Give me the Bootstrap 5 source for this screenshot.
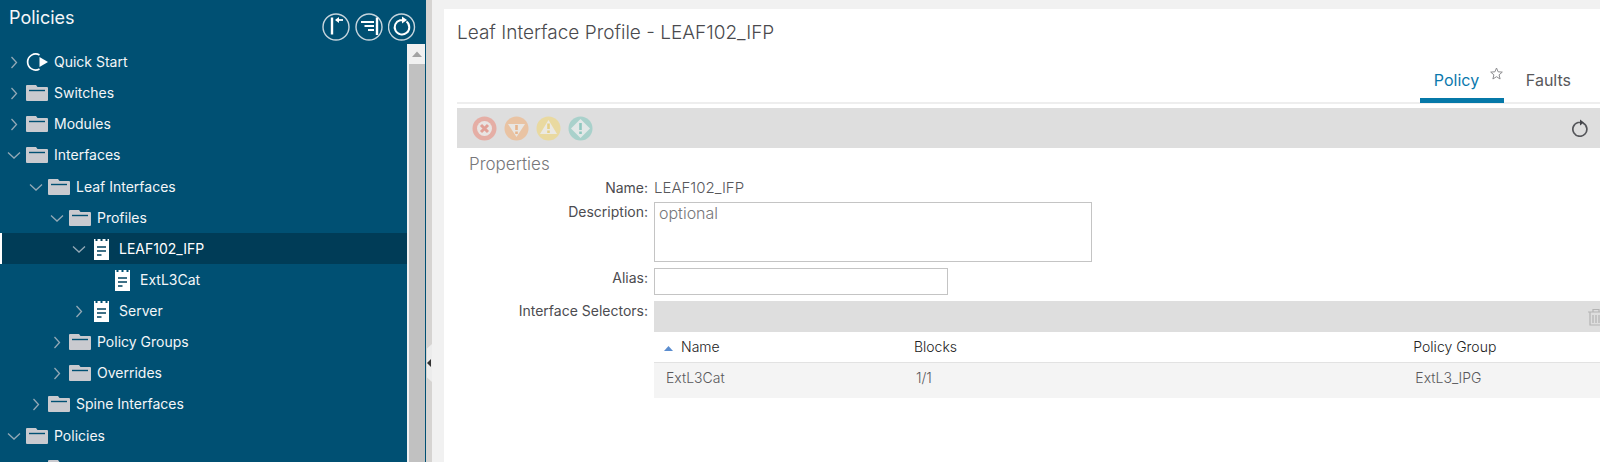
<!DOCTYPE html>
<html lang="en">
<head>
<meta charset="utf-8">
<meta name="viewport" content="width=device-width, initial-scale=1">
<title>Policies - Leaf Interface Profile</title>
<link href="https://cdn.jsdelivr.net/npm/bootstrap@5.3.0/dist/css/bootstrap.min.css" rel="stylesheet">
<style>
  body { font-family: Inter, "Liberation Sans", sans-serif; font-size: 14px; line-height: 20px; color: #58585b; background: #f1f1f1; }
  .app-shell { height: 100vh; }
  .side-pane { flex: 0 0 426px; background: #005073; color: #f4f6f8; }
  .side-head { height: 46px; padding: 8px 10px 0 9px; }
  .side-title { font-size: 18px; line-height: 20px; font-weight: 400; }
  .side-tools { gap: 5px; padding-top: 5px; }
  .icon-btn { border: 0; background: none; padding: 0; line-height: 0; color: inherit; }
  .tree-area { border-right: 1px solid #005073; }
  .tree-view, .tree-view ul { list-style: none; margin: 0; padding: 0; }
  .tree-view { padding-top: 2px; }
  .tree-view > li > ul { padding: 1px 0; }
  .tree-row { height: 31px; padding-left: 4px; color: inherit; text-decoration: none; font-size: 14px; white-space: nowrap; }
  .tree-row svg { flex: none; }
  .tree-row .chev { width: 20px; height: 20px; margin-right: 2px; }
  .tree-row .node-icon { width: 22px; height: 24px; margin-right: 6px; }
  .lv1 { padding-left: 26px; }
  .lv2 { padding-left: 47px; }
  .lv3 { padding-left: 69px; }
  .lv4 { padding-left: 90px; }
  .tree-row.is-current { background: #003c57; box-shadow: inset 2px 0 #fff; color: #fff; }
  .scroll-track { flex: 0 0 18px; background: #c1c1c1; border-left: 2px solid #f1f1f1; }
  .scroll-up { height: 20px; background: #f1f1f1; }
  .splitter { flex: 0 0 6px; background: #d6d4d2; }
  .splitter-grip { top: 344px; left: 1px; width: 5px; height: 38px; background: #ececec; clip-path: polygon(100% 0, 100% 100%, 0 88%, 0 12%); }
  .main-pane { margin: 9px 0 0 12px; padding-left: 13px; background: #fff; }
  .page-title { font-size: 19px; line-height: 24px; font-weight: 300; margin: 0; padding-top: 12px; color: #4a4a4e; }
  .tab-strip { height: 51px; border-bottom: 2px solid #eee; padding-right: 7px; }
  .tab-link { border: 0; background: none; color: #58585b; font-size: 16px; line-height: 20px; padding: 0 22px 8px; border-bottom: 5px solid transparent; margin-bottom: -1px; }
  .tab-link.is-active { color: #0a78ad; border-bottom-color: #0578a8; padding: 0 0 8px 14px; width: 84px; text-align: left; }
  .tab-star { top: -3px; left: 70px; }
  .fault-bar { height: 40px; margin-top: 4px; padding: 0 12px 0 15px; gap: 7px; background: #dedede; }
  .section-title { font-size: 17px; line-height: 20px; font-weight: 300; margin: 0; padding: 6px 0 4px 12px; color: #77777a; }
  .form-line { margin-bottom: 6px; }
  .form-line > label, .form-line > .side-label { flex: 0 0 197px; padding-right: 6px; text-align: right; color: #4c4c50; }
  .plain-value { font-size: 15px; font-weight: 300; }
  .field-box { border: 1px solid #c4c4c4; background: #fff; padding: 0 4px; outline-color: #0578a8; color: #58585b; font-size: 16px; line-height: 20px; resize: none; }
  .field-box::placeholder { color: #77777a; font-weight: 300; opacity: 1; }
  .desc-box { flex: 0 1 438px; height: 60px; }
  .alias-box { flex: 0 1 294px; height: 27px; }
  .grid-bar { height: 31px; background: #dedede; overflow: hidden; }
  .grid-bar .icon-btn { margin-right: -4px; }
  .sel-grid { width: 100%; table-layout: fixed; border-collapse: collapse; }
  .sel-grid th { height: 30px; padding: 0 14px; font-weight: 300; color: #222; border-bottom: 1px solid #e2e2e2; }
  .sel-grid th:first-child { padding-left: 10px; }
  .sel-grid td { height: 36px; padding: 0 16px 4px; font-weight: 300; background: #f4f4f4; }
  .sel-grid td:first-child { padding-left: 12px; }
  .sel-grid th:last-child { padding-left: 12px; }
  .sel-grid td:last-child { padding-left: 14px; }
  .col-a { width: 26%; }
  .col-b { width: 53%; }
</style>
<script src="https://cdn.jsdelivr.net/npm/bootstrap@5.3.0/dist/js/bootstrap.bundle.min.js"></script>
</head>
<body>
<svg class="d-none" aria-hidden="true">
  <symbol id="i-right" viewBox="0 0 20 20"><path d="M7.500 5l5 5.500-5 5.500" fill="none" stroke="#93a9b6" stroke-width="1.300"/></symbol>
  <symbol id="i-down" viewBox="0 0 20 20"><path d="M4 7.500l6 5.500 6-5.500" fill="none" stroke="#93a9b6" stroke-width="1.300"/></symbol>
  <symbol id="i-folder" viewBox="0 0 22 24"><path d="M0 5q0-1 1-1h9l1.500 2H21q1 0 1 1v12q0 1-1 1H1q-1 0-1-1z" fill="#c9cacf"/><path d="M3 9.500h16" stroke="#005073" stroke-width="1.400"/></symbol>
  <symbol id="i-doc" viewBox="0 0 22 24"><path d="M3 2h1.500v2h2V2h3v2h2V2h3v2h2V2H18v21H3z" fill="#fff"/><path d="M6 10h9M6 14h9M6 18h4.500" stroke="#00425f" stroke-width="1.500"/></symbol>
  <symbol id="i-start" viewBox="0 0 22 24"><path d="M13.500 5A8 8 0 1 0 13.500 19" fill="none" stroke="#fff" stroke-width="1.700"/><path d="M13.500 7l8.500 5-8.500 5z" fill="#fff"/></symbol>
</svg>

<div class="app-shell d-flex overflow-hidden">
  <aside class="side-pane d-flex flex-column">
    <header class="side-head d-flex justify-content-between align-items-start">
      <h1 class="side-title m-0">Policies</h1>
      <div class="side-tools d-flex">
        <button class="icon-btn" type="button" aria-label="Collapse pane"><svg width="28" height="28" viewBox="0 0 28 28" fill="none" stroke="#fff"><circle cx="14" cy="14" r="13" stroke="#c6d5dd" stroke-width="1.400"/><path d="M10 4.500v17" stroke-width="2.400"/><path d="M14 7h7" stroke-width="1.800"/><path d="M13 7l4-3v6z" fill="#fff" stroke="none"/></svg></button>
        <button class="icon-btn" type="button" aria-label="Collapse tree"><svg width="28" height="28" viewBox="0 0 28 28" fill="none" stroke="#fff"><circle cx="14" cy="14" r="13" stroke="#c6d5dd" stroke-width="1.400"/><path d="M22 4.500v17.500" stroke-width="2.400"/><path d="M6 9h13M9.500 13h9.500M13 17h6" stroke-width="1.900"/></svg></button>
        <button class="icon-btn" type="button" aria-label="Refresh tree"><svg width="28" height="28" viewBox="0 0 28 28" fill="none" stroke="#fff"><circle cx="13.500" cy="14" r="13" stroke="#c6d5dd" stroke-width="1.400"/><path d="M18.500 8.500A7.300 7.300 0 1 1 12 7.200h4" stroke-width="2"/><path d="M14 3.500l5 3.500-5 3.500z" fill="#fff" stroke="none"/></svg></button>
      </div>
    </header>
    <div class="tree-area d-flex flex-grow-1 overflow-hidden">
      <nav class="flex-grow-1" aria-label="Policies">
        <ul class="tree-view">
          <li><a href="#" class="tree-row d-flex align-items-center"><svg class="chev"><use href="#i-right"/></svg><svg class="node-icon"><use href="#i-start"/></svg>Quick Start</a></li>
          <li><a href="#" class="tree-row d-flex align-items-center"><svg class="chev"><use href="#i-right"/></svg><svg class="node-icon"><use href="#i-folder"/></svg>Switches</a></li>
          <li><a href="#" class="tree-row d-flex align-items-center"><svg class="chev"><use href="#i-right"/></svg><svg class="node-icon"><use href="#i-folder"/></svg>Modules</a></li>
          <li><a href="#" class="tree-row d-flex align-items-center"><svg class="chev"><use href="#i-down"/></svg><svg class="node-icon"><use href="#i-folder"/></svg>Interfaces</a>
            <ul>
              <li><a href="#" class="tree-row lv1 d-flex align-items-center"><svg class="chev"><use href="#i-down"/></svg><svg class="node-icon"><use href="#i-folder"/></svg>Leaf Interfaces</a>
                <ul>
                  <li><a href="#" class="tree-row lv2 d-flex align-items-center"><svg class="chev"><use href="#i-down"/></svg><svg class="node-icon"><use href="#i-folder"/></svg>Profiles</a>
                    <ul>
                      <li><a href="#" class="tree-row lv3 is-current d-flex align-items-center" aria-current="page"><svg class="chev"><use href="#i-down"/></svg><svg class="node-icon"><use href="#i-doc"/></svg>LEAF102_IFP</a>
                        <ul>
                          <li><a href="#" class="tree-row lv4 d-flex align-items-center"><svg class="chev"></svg><svg class="node-icon"><use href="#i-doc"/></svg>ExtL3Cat</a></li>
                        </ul>
                      </li>
                      <li><a href="#" class="tree-row lv3 d-flex align-items-center"><svg class="chev"><use href="#i-right"/></svg><svg class="node-icon"><use href="#i-doc"/></svg>Server</a></li>
                    </ul>
                  </li>
                  <li><a href="#" class="tree-row lv2 d-flex align-items-center"><svg class="chev"><use href="#i-right"/></svg><svg class="node-icon"><use href="#i-folder"/></svg>Policy Groups</a></li>
                  <li><a href="#" class="tree-row lv2 d-flex align-items-center"><svg class="chev"><use href="#i-right"/></svg><svg class="node-icon"><use href="#i-folder"/></svg>Overrides</a></li>
                </ul>
              </li>
              <li><a href="#" class="tree-row lv1 d-flex align-items-center"><svg class="chev"><use href="#i-right"/></svg><svg class="node-icon"><use href="#i-folder"/></svg>Spine Interfaces</a></li>
            </ul>
          </li>
          <li><a href="#" class="tree-row d-flex align-items-center"><svg class="chev"><use href="#i-down"/></svg><svg class="node-icon"><use href="#i-folder"/></svg>Policies</a>
            <ul>
              <li><a href="#" class="tree-row lv1 d-flex align-items-center"><svg class="chev"><use href="#i-right"/></svg><svg class="node-icon"><use href="#i-folder"/></svg>Switch</a></li>
            </ul>
          </li>
        </ul>
      </nav>
      <div class="scroll-track">
        <div class="scroll-up d-flex align-items-center justify-content-center"><svg width="10" height="6" viewBox="0 0 10 6"><path d="M0 6l5-5.500L10 6z" fill="#a3a3a3"/></svg></div>
      </div>
    </div>
  </aside>
  <div class="splitter position-relative"><div class="splitter-grip position-absolute d-flex align-items-center"><svg width="4" height="8" viewBox="0 0 4 8"><path d="M4 0v8L0 4z" fill="#333"/></svg></div></div>

  <main class="main-pane flex-grow-1 overflow-hidden">
    <h2 class="page-title">Leaf Interface Profile - LEAF102_IFP</h2>
    <div class="tab-strip mt-2 d-flex justify-content-end align-items-end">
      <button class="tab-link is-active position-relative" type="button">Policy<svg class="tab-star position-absolute" width="13" height="13" viewBox="0 0 13 13"><path d="M6.500 1l1.600 3.800 4.200.3-3.200 2.700 1 4.200-3.600-2.300L2.900 12l1-4.200L.7 5.100l4.200-.3z" fill="none" stroke="#8d8d90"/></svg></button>
      <button class="tab-link" type="button">Faults</button>
    </div>
    <div class="fault-bar d-flex align-items-center">
      <button class="icon-btn" type="button" aria-label="Critical faults"><svg width="25" height="25" viewBox="0 0 25 25"><circle cx="12.500" cy="12.500" r="12" fill="#e5aea5"/><circle cx="12.500" cy="12.500" r="7.500" fill="#e9e4e2"/><path d="M9 9l7 7M16 9l-7 7" stroke="#e2a096" stroke-width="3"/></svg></button>
      <button class="icon-btn" type="button" aria-label="Major faults"><svg width="25" height="25" viewBox="0 0 25 25"><circle cx="12.500" cy="12.500" r="12" fill="#e9c3a3"/><path d="M4 8h17l-8.500 13z" fill="#e9e6e2"/><path d="M12.500 9v5M12.500 15.500v2.500" stroke="#e8b58c" stroke-width="2.600"/></svg></button>
      <button class="icon-btn" type="button" aria-label="Minor faults"><svg width="25" height="25" viewBox="0 0 25 25"><circle cx="12.500" cy="12.500" r="12" fill="#e9d9a0"/><path d="M4 18h17L12.500 4z" fill="#ebe9e2"/><path d="M12.500 7.500v5.500M12.500 14.500V17" stroke="#e6d086" stroke-width="2.600"/></svg></button>
      <button class="icon-btn" type="button" aria-label="Warning faults"><svg width="25" height="25" viewBox="0 0 25 25"><circle cx="12.500" cy="12.500" r="12" fill="#a9d1cb"/><path d="M12.500 3l9.500 9.500-9.500 9.500L3 12.500z" fill="#e2e8e7"/><path d="M12.500 7v7M12.500 15.500v2.500" stroke="#8ec7bf" stroke-width="2.600"/></svg></button>
      <button class="icon-btn ms-auto" type="button" aria-label="Refresh"><svg width="16" height="18" viewBox="0 0 16 18"><path d="M11 4A7 7 0 1 1 6 3.500h3.500" fill="none" stroke="#55565a" stroke-width="1.700"/><path d="M8 .5l4 3-4 3z" fill="#44454a"/></svg></button>
    </div>
    <h3 class="section-title">Properties</h3>
    <form>
      <div class="form-line d-flex mb-0"><span class="side-label">Name:</span><span class="plain-value">LEAF102_IFP</span></div>
      <div class="form-line d-flex"><label class="pt-1" for="desc">Description:</label><textarea class="field-box desc-box mt-1" id="desc" placeholder="optional"></textarea></div>
      <div class="form-line d-flex"><label for="alias">Alias:</label><input class="field-box alias-box" id="alias" type="text"></div>
      <div class="form-line d-flex"><span class="side-label" id="sel-label">Interface Selectors:</span>
        <div class="flex-grow-1">
          <div class="grid-bar d-flex align-items-center justify-content-end"><button class="icon-btn" type="button" aria-label="Delete selector"><svg width="16" height="18" viewBox="0 0 16 18" fill="none" stroke="#b3b3b3"><path d="M0 4h16M5 3.500V1.500h6v2M2 4v13h12V4M5 7v8M8 7v8M11 7v8" stroke-width="1.200"/></svg></button></div>
          <table class="sel-grid" aria-labelledby="sel-label">
            <colgroup><col class="col-a"><col class="col-b"><col></colgroup>
            <thead><tr><th scope="col"><svg class="me-2" width="9" height="6" viewBox="0 0 9 6"><path d="M0 6l4.500-5L9 6z" fill="#5b8dcf"/></svg>Name</th><th scope="col">Blocks</th><th scope="col">Policy Group</th></tr></thead>
            <tbody><tr><td>ExtL3Cat</td><td>1/1</td><td>ExtL3_IPG</td></tr></tbody>
          </table>
        </div>
      </div>
    </form>
  </main>
</div>
</body>
</html>
